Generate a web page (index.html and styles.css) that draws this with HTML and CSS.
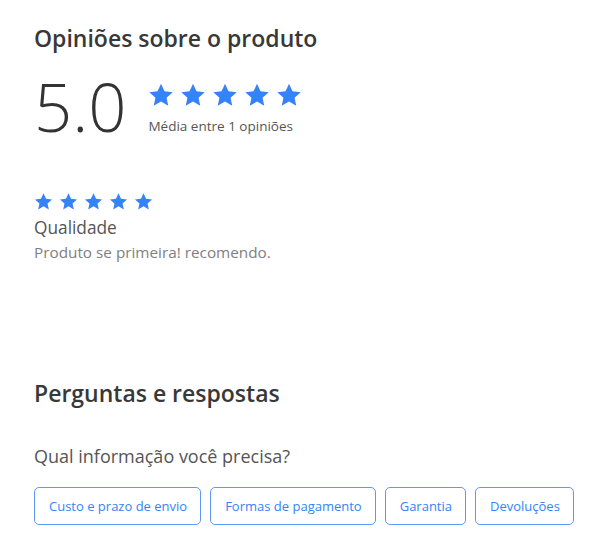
FILE: index.html
```html
<!DOCTYPE html>
<html lang="pt-BR">
<head>
<meta charset="UTF-8">
<meta name="viewport" content="width=device-width, initial-scale=1.0">
<title>Opiniões sobre o produto</title>
<link rel="stylesheet" href="styles.css">
</head>
<body>
<svg width="0" height="0" class="defs">
    <defs>
        <symbol id="star" viewBox="0 0 24 24">
            <path d="M12 1.6l3.2 7 7.6.8-5.7 5.1 1.6 7.5L12 18.1 5.3 22l1.6-7.5L1.2 9.4l7.6-.8z"/>
        </symbol>
    </defs>
</svg>

<section class="reviews">
    <h2 class="section-title">Opiniões sobre o produto</h2>
    <div class="summary">
        <div class="average">5.0</div>
        <div class="summary-info">
            <div class="stars stars-big">
                <svg><use href="#star"/></svg>
                <svg><use href="#star"/></svg>
                <svg><use href="#star"/></svg>
                <svg><use href="#star"/></svg>
                <svg><use href="#star"/></svg>
            </div>
            <div class="summary-count">Média entre 1 opiniões</div>
        </div>
    </div>

    <div class="review">
        <div class="stars stars-small">
            <svg><use href="#star"/></svg>
            <svg><use href="#star"/></svg>
            <svg><use href="#star"/></svg>
            <svg><use href="#star"/></svg>
            <svg><use href="#star"/></svg>
        </div>
        <div class="review-title">Qualidade</div>
        <p class="review-text">Produto se primeira! recomendo.</p>
    </div>
</section>

<section class="questions">
    <h2 class="section-title">Perguntas e respostas</h2>
    <p class="questions-lead">Qual informação você precisa?</p>
    <div class="quick-buttons">
        <button class="quick">Custo e prazo de envio</button>
        <button class="quick">Formas de pagamento</button>
        <button class="quick">Garantia</button>
        <button class="quick">Devoluções</button>
    </div>
</section>
</body>
</html>
```

FILE: styles.css
```css
body {
    font-family: "Open Sans", Arial, sans-serif;
    color: #333;
    background: #fff;
    margin: 0;
    padding: 23px 34px 0;
}
.defs {
    position: absolute;
}
.section-title {
    font-size: 23px;
    font-weight: 600;
    color: #383838;
    margin: 0;
    line-height: 30px;
}
.summary {
    display: flex;
    align-items: flex-start;
    margin-top: 20px;
}
.average {
    font-size: 67px;
    font-weight: 300;
    line-height: 67px;
    color: #333;
    margin-right: 22px;
}
.summary-info {
    padding-top: 9px;
}
.stars {
    display: flex;
    fill: #3483fa;
}
.stars svg {
    display: block;
}
.stars-big {
    gap: 6px;
}
.stars-big svg {
    width: 26px;
    height: 26px;
}
.summary-count {
    font-size: 13.5px;
    color: #555;
    margin-top: 9px;
}
.review {
    margin-top: 52px;
}
.stars-small {
    gap: 6px;
}
.stars-small svg {
    width: 19px;
    height: 19px;
}
.review-title {
    font-size: 17.3px;
    color: #555;
    margin-top: 5px;
}
.review-text {
    font-size: 15.3px;
    color: #808080;
    margin: 3px 0 0;
}
.questions {
    margin-top: 116px;
}
.questions-lead {
    font-size: 18px;
    color: #555;
    margin: 36px 0 0;
}
.quick-buttons {
    display: flex;
    gap: 9px;
    margin-top: 19px;
}
.quick {
    flex: none;
    white-space: nowrap;
    font-family: inherit;
    font-size: 13px;
    color: #3483fa;
    background: #fff;
    border: 1px solid #5d9af5;
    border-radius: 5px;
    height: 38px;
    padding: 0 13px 0 14px;
    cursor: pointer;
}
```
